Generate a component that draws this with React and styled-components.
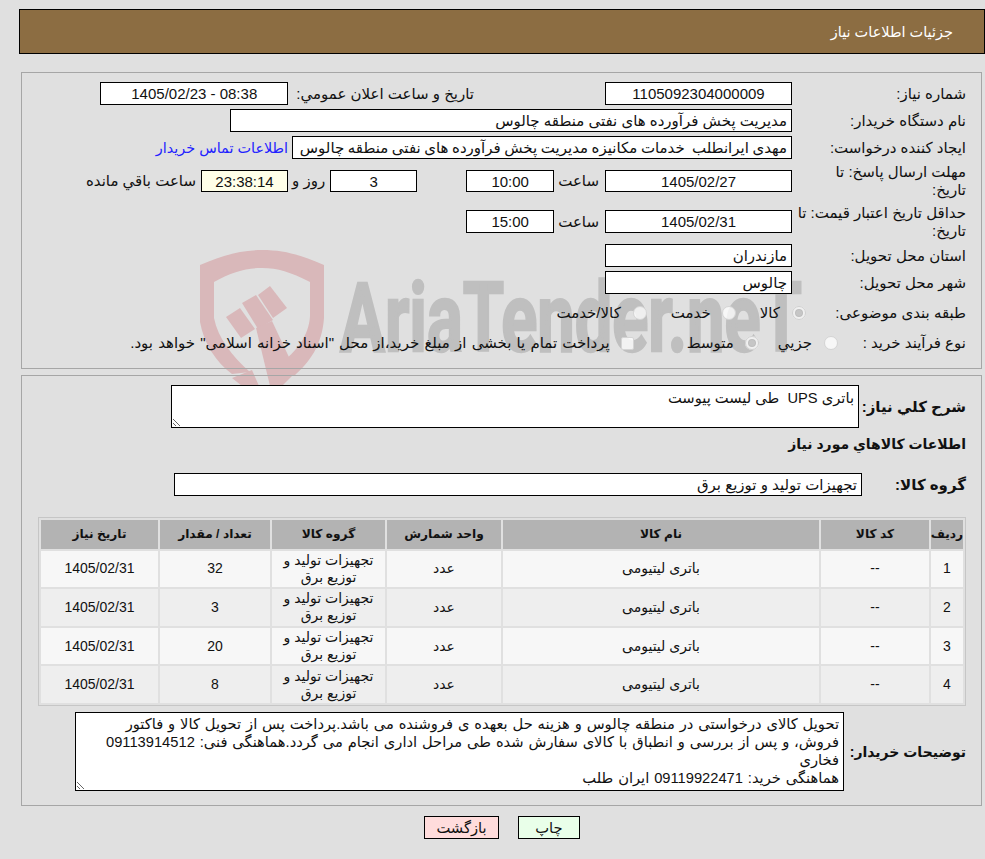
import React from "react";
import styled, { createGlobalStyle } from "styled-components";

const GlobalStyle = createGlobalStyle`
  html, body {
    margin: 0;
    padding: 0;
    background: #e0e0e0;
  }
  body {
    font-family: "Liberation Sans", "DejaVu Sans", sans-serif;
    font-size: 15px;
    color: #111;
  }
`;

const Page = styled.div`
  position: relative;
  width: 985px;
  height: 859px;
  overflow: hidden;
  padding-top: 9px;
  box-sizing: border-box;
  direction: rtl;
`;

const Watermark = styled.svg`
  position: absolute;
  left: 0;
  top: 0;
  width: 985px;
  height: 859px;
`;

const Header = styled.div`
  position: relative;
  box-sizing: border-box;
  height: 45px;
  margin: 0 0 0 19px;
  padding: 0 31px;
  display: flex;
  align-items: center;
  background: #8c6d42;
  border: 1px solid #000;
  color: #fff;
  font-size: 14.5px;
`;

const Panel = styled.div`
  position: relative;
  box-sizing: border-box;
  width: 961px;
  height: ${(p) => p.$h}px;
  margin: ${(p) => p.$top}px 3px 0 0;
  padding: 9px 15px 0 0;
  border: 1px solid #a6a6a6;
  display: flex;
  flex-direction: column;
`;

const Row = styled.div`
  display: flex;
  align-items: center;
  height: ${(p) => p.$h || 23}px;
  margin-top: ${(p) => p.$mt || 0}px;
  margin-bottom: ${(p) => (p.$mb === undefined ? 4 : p.$mb)}px;
`;

const Label = styled.div`
  flex: none;
  width: 170px;
  margin-left: 4px;
  line-height: 18px;
  white-space: normal;
`;

const Field = styled.div`
  flex: none;
  box-sizing: border-box;
  width: ${(p) => p.$w}px;
  height: ${(p) => p.$h || 23}px;
  margin-right: ${(p) => p.$mr || 0}px;
  padding: 0 4px;
  background: ${(p) => p.$bg || "#fff"};
  border: 1px solid #000;
  line-height: 21px;
  word-spacing: ${(p) => p.$ws || 0}px;
  text-align: ${(p) => (p.$center ? "center" : "right")};
  white-space: pre;
  overflow: hidden;
`;

const Inline = styled.span`
  flex: none;
  margin-right: ${(p) => p.$mr || 0}px;
  word-spacing: ${(p) => p.$ws || 0}px;
  white-space: nowrap;
`;

const ContactLink = styled.a`
  flex: none;
  margin-right: 4px;
  color: #2222ff;
  font-size: 14.4px;
  text-decoration: none;
  white-space: nowrap;
`;

const Radio = styled.span`
  flex: none;
  box-sizing: border-box;
  width: 14px;
  height: 14px;
  margin-right: ${(p) => p.$mr || 0}px;
  border-radius: 50%;
  background: ${(p) => (p.$on ? "#c6c6c6" : "rgba(255, 255, 255, 0.75)")};
  border: ${(p) => (p.$on ? "3px solid #f0f0f0" : "1px solid #d4d4d4")};
  box-shadow: ${(p) => (p.$on ? "inset 0 0 0 1px #bdbdbd" : "none")};
  outline: ${(p) => (p.$on ? "1px solid #d0d0d0" : "none")};
  outline-offset: -1px;
`;

const Check = styled.span`
  flex: none;
  box-sizing: border-box;
  width: 13px;
  height: 13px;
  margin-right: ${(p) => p.$mr || 0}px;
  border-radius: 2px;
  background: rgba(255, 255, 255, 0.8);
  border: 1px solid #d4d4d4;
`;

const BoldLabel = styled.div`
  flex: none;
  width: ${(p) => p.$w}px;
  font-weight: 700;
  font-size: ${(p) => p.$fs || 15}px;
  white-space: nowrap;
`;

const Note = styled.textarea`
  flex: none;
  box-sizing: border-box;
  display: block;
  width: ${(p) => p.$w}px;
  height: ${(p) => p.$h}px;
  margin: 0;
  padding: ${(p) => p.$pt}px 4px 0;
  background: #fff;
  border: 1px solid #000;
  border-radius: 0;
  outline: none;
  color: #111;
  font-family: "Liberation Sans", "DejaVu Sans", sans-serif;
  font-size: 14.7px;
  line-height: ${(p) => p.$lh}px;
  word-spacing: ${(p) => p.$ws || 0}px;
  direction: rtl;
  white-space: pre;
  overflow: hidden;
`;

const Heading = styled.div`
  height: 30px;
  margin: 1px 0 14px;
  line-height: 30px;
  font-weight: 700;
  font-size: 14px;
`;

const Table = styled.table`
  box-sizing: border-box;
  width: 928px;
  margin: 0;
  table-layout: fixed;
  border: 1px solid #c6c6c6;
  border-spacing: 2px;
  border-collapse: separate;
  font-size: 14px;
`;

const Th = styled.th`
  width: ${(p) => p.$w}px;
  height: 28.5px;
  padding: 0;
  background: #b3b3b3;
  font-size: 12.2px;
  font-weight: 700;
  text-align: center;
`;

const BodyRow = styled.tr`
  background: ${(p) => (p.$odd ? "#f7f7f7" : "#eeeeee")};
`;

const Td = styled.td`
  height: 36.67px;
  padding: 0;
  line-height: 17px;
  text-align: center;
`;

const Buttons = styled.div`
  position: relative;
  display: flex;
  justify-content: center;
  gap: 19px;
  margin: 10px 405px 0 0;
  width: 156px;
`;

const ActionButton = styled.button`
  box-sizing: border-box;
  height: 23px;
  width: ${(p) => p.$w}px;
  padding: 0;
  background: ${(p) => p.$bg};
  border: 1px solid #000;
  color: #111;
  font-family: "Liberation Sans", "DejaVu Sans", sans-serif;
  font-size: 14.7px;
`;

const items = [
  { id: 1, qty: 32 },
  { id: 2, qty: 3 },
  { id: 3, qty: 20 },
  { id: 4, qty: 8 },
];

const notes = [
  "تحویل کالای درخواستی در منطقه چالوس و هزینه حل بعهده ی فروشنده می باشد.پرداخت پس از تحویل کالا و فاکتور",
  "فروش، و پس از بررسی و انطباق با کالای سفارش شده طی مراحل اداری انجام می گردد.هماهنگی فنی: 09113914512",
  "فخاری",
  "هماهنگی خرید: 09119922471 ایران طلب",
].join("\n");

export default function App() {
  return (
    <>
      <GlobalStyle />
      <Page>
        <Watermark viewBox="0 0 985 859">
          <path
            fill="#d9b8ba"
            fillRule="evenodd"
            d="M200 265 C225 255 240 250 262 250 C285 250 300 255 324 265 L324 318 C322 345 310 362 294 376 L280 364 C296 352 309 336 310 316 L310 282 C290 272 278 268 262 268 C246 268 232 272 214 282 L214 318 C218 338 232 356 250 372 L232 374 C216 362 204 344 200 322 Z"
          />
          <polygon fill="#d9b8ba" points="232,378 252,370 259,386 242,386" />
          <polygon fill="#d9b8ba" points="226,317 240,308 255,329 241,338" />
          <polygon fill="#d9b8ba" points="242,303 256,295 273,320 258,329" />
          <polygon fill="#d9b8ba" points="258,295 270,286 287,308 273,318" />
          <polygon fill="#d9b8ba" points="256,328 272,321 296,372 282,386 270,386" />
          <text
            x="340"
            y="351"
            fontFamily="Roboto, sans-serif"
            fontWeight="700"
            fontSize="96"
            fill="#bfbfbf"
            stroke="#bfbfbf"
            strokeWidth="2.5"
            textLength="462"
            lengthAdjust="spacingAndGlyphs"
            style={{ direction: "ltr" }}
          >
            AriaTender.neT
          </text>
        </Watermark>

        <Header>جزئیات اطلاعات نیاز</Header>

        <Panel $top={18} $h={297}>
          <Row>
            <Label>شماره نیاز:</Label>
            <Field $w={187} $center>1105092304000009</Field>
            <Inline $mr={131}>تاریخ و ساعت اعلان عمومي:</Inline>
            <Field $w={188} $mr={8} $center>08:38 - 1405/02/23</Field>
          </Row>
          <Row>
            <Label>نام دستگاه خریدار:</Label>
            <Field $w={562}>مدیریت پخش فرآورده های نفتی منطقه چالوس</Field>
          </Row>
          <Row>
            <Label>ایجاد کننده درخواست:</Label>
            <Field $w={500} $ws={-0.6}>مهدی ایرانطلب  خدمات مکانیزه مدیریت پخش فرآورده های نفتی منطقه چالوس</Field>
            <ContactLink href="#">اطلاعات تماس خریدار</ContactLink>
          </Row>
          <Row $h={36}>
            <Label>مهلت ارسال پاسخ: تا<br />تاریخ:</Label>
            <Field $w={187} $h={22} $center>1405/02/27</Field>
            <Inline $mr={6}>ساعت</Inline>
            <Field $w={88} $h={22} $mr={4} $center>10:00</Field>
            <Field $w={87} $h={22} $mr={49} $center>3</Field>
            <Inline $mr={5}>روز و</Inline>
            <Field $w={87} $h={22} $mr={4} $bg="#ffffe8" $center>23:38:14</Field>
            <Inline $mr={5}>ساعت باقي مانده</Inline>
          </Row>
          <Row $h={37}>
            <Label>حداقل تاریخ اعتبار قیمت: تا<br />تاریخ:</Label>
            <Field $w={187} $center>1405/02/31</Field>
            <Inline $mr={6}>ساعت</Inline>
            <Field $w={88} $mr={4} $center>15:00</Field>
          </Row>
          <Row>
            <Label>استان محل تحویل:</Label>
            <Field $w={187}>مازندران</Field>
          </Row>
          <Row>
            <Label>شهر محل تحویل:</Label>
            <Field $w={187}>چالوس</Field>
          </Row>
          <Row $h={30}>
            <Label>طبقه بندی موضوعی:</Label>
            <Radio $on $mr={-14} />
            <Inline $mr={12}>کالا</Inline>
            <Radio $mr={24} />
            <Inline $mr={11}>خدمت</Inline>
            <Radio $mr={24} />
            <Inline $mr={12}>کالا/خدمت</Inline>
          </Row>
          <Row $h={22} $mb={0}>
            <Label>نوع فرآیند خرید :</Label>
            <Radio $mr={-46} />
            <Inline $mr={12}>جزيي</Inline>
            <Radio $on $mr={19} />
            <Inline $mr={11}>متوسط</Inline>
            <Check $mr={53} />
            <Inline $mr={11} $ws={1}>پرداخت تمام یا بخشی از مبلغ خرید،از محل "اسناد خزانه اسلامی" خواهد بود.</Inline>
          </Row>
        </Panel>

        <Panel $top={6} $h={431}>
          <Row $h={43} $mb={0}>
            <BoldLabel $w={107}>شرح کلي نیاز:</BoldLabel>
            <Note $w={688} $h={43} $pt={2} $lh={20.5} readOnly value="باتری UPS  طی لیست پیوست" />
          </Row>
          <Heading>اطلاعات کالاهاي مورد نیاز</Heading>
          <Row $mb={21}>
            <BoldLabel $w={104}>گروه کالا:</BoldLabel>
            <Field $w={688}>تجهیزات تولید و توزیع برق</Field>
          </Row>
          <Table>
            <thead>
              <tr>
                <Th $w={32}>ردیف</Th>
                <Th $w={108}>کد کالا</Th>
                <Th $w={316}>نام کالا</Th>
                <Th $w={114}>واحد شمارش</Th>
                <Th $w={113}>گروه کالا</Th>
                <Th $w={110}>تعداد / مقدار</Th>
                <Th $w={117}>تاریخ نیاز</Th>
              </tr>
            </thead>
            <tbody>
              {items.map((item) => (
                <BodyRow key={item.id} $odd={item.id === 1 || item.id === 3}>
                  <Td>{item.id}</Td>
                  <Td>--</Td>
                  <Td>باتری لیتیومی</Td>
                  <Td>عدد</Td>
                  <Td>تجهیزات تولید و توزیع برق</Td>
                  <Td>{item.qty}</Td>
                  <Td>1405/02/31</Td>
                </BodyRow>
              ))}
            </tbody>
          </Table>
          <Row $h={79} $mb={0} $mt={6}>
            <BoldLabel $w={122} $fs={14}>توضیحات خریدار:</BoldLabel>
            <Note $w={769} $h={79} $pt={2} $lh={18} $ws={0.8} readOnly value={notes} />
          </Row>
        </Panel>

        <Buttons>
          <ActionButton $w={62} $bg="#e9ffe9">چاپ</ActionButton>
          <ActionButton $w={75} $bg="#ffdcdc">بازگشت</ActionButton>
        </Buttons>
      </Page>
    </>
  );
}
